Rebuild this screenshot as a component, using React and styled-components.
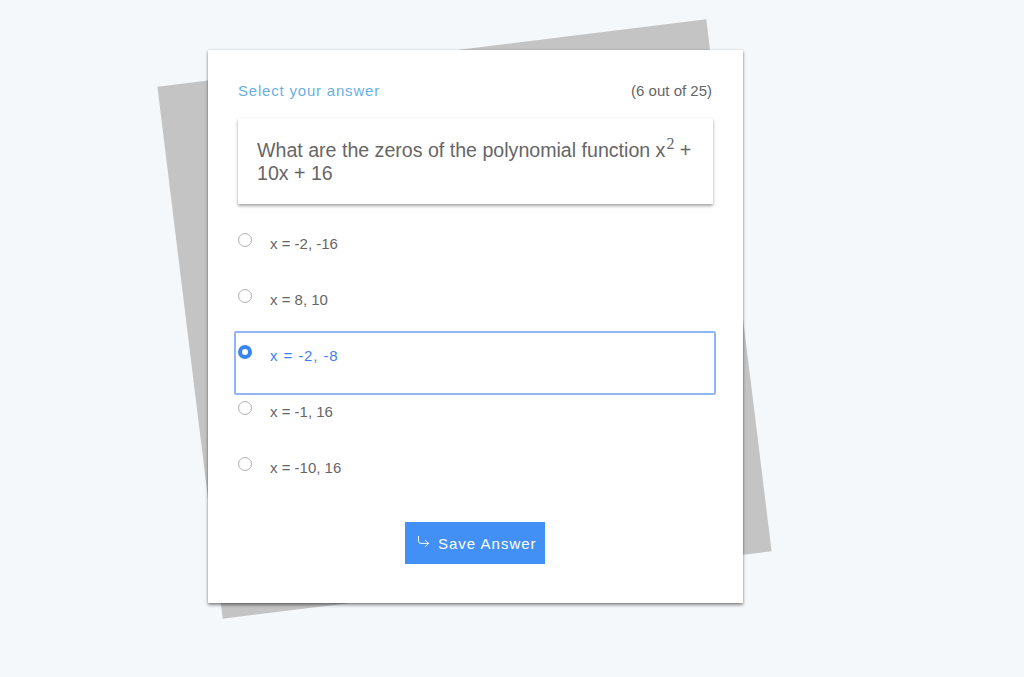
import React, { useState } from "react";
import styled, { createGlobalStyle } from "styled-components";
import { CornerDownRight } from "lucide-react";

const GlobalStyle = createGlobalStyle`
  html, body {
    margin: 0;
    padding: 0;
    background: #f5f8fb;
    font-family: "Liberation Sans", Arial, sans-serif;
  }
`;

const Page = styled.div`
  min-height: 677px;
  padding: 50px 0 0 208px;
  box-sizing: border-box;
`;

const Stack = styled.div`
  position: relative;
  width: 535px;
  z-index: 0;

  &::before {
    content: "";
    position: absolute;
    left: -20px;
    top: 1px;
    width: 553px;
    height: 536px;
    background: #c4c4c4;
    transform: rotate(-7deg);
    z-index: -1;
  }
`;

const Card = styled.div`
  background: #fff;
  padding: 31px 30px 39px 30px;
  box-shadow: 0 2px 3px rgba(0, 0, 0, 0.45), 0 0 2px rgba(0, 0, 0, 0.12);
`;

const Header = styled.div`
  display: flex;
  justify-content: space-between;
  align-items: center;
  line-height: 20px;
  font-size: 15px;
`;

const Title = styled.span`
  color: #6aafe2;
  letter-spacing: 0.8px;
`;

const Counter = styled.span`
  color: #666;
  margin-right: 1px;
`;

const Question = styled.div`
  margin-top: 17px;
  padding: 21px 14px 19px 19px;
  font-size: 19.6px;
  line-height: 23px;
  color: #666;
  box-shadow: 0 2px 3px rgba(0, 0, 0, 0.35), 0 0 1px rgba(0, 0, 0, 0.1);

  sup {
    font-family: "Liberation Serif", "Times New Roman", serif;
    font-size: 16px;
    line-height: 0;
    margin-left: 1px;
  }
`;

const Options = styled.div`
  margin: 15px -3px 0 -4px;
  display: flex;
  flex-direction: column;
`;

const Option = styled.label`
  display: flex;
  align-items: flex-start;
  gap: 18px;
  box-sizing: border-box;
  height: ${(p) => (p.$selected ? "64px" : "56px")};
  margin-bottom: ${(p) => (p.$selected ? "-8px" : "0")};
  padding: 12px 2px 0 2px;
  border: 2px solid ${(p) => (p.$selected ? "#93b4f5" : "transparent")};
  border-radius: 2px;
  cursor: pointer;
  position: relative;
  z-index: ${(p) => (p.$selected ? 1 : 0)};
`;

const Radio = styled.span`
  flex: none;
  width: 14px;
  height: 14px;
  border-radius: 50%;
  box-sizing: border-box;
  border: ${(p) => (p.$checked ? "4.5px solid #3a86f0" : "1px solid #b0b0b0")};
  background: #fff;
`;

const OptionText = styled.span`
  font-size: 15px;
  line-height: 21px;
  color: ${(p) => (p.$selected ? "#3b82f0" : "#666")};
  letter-spacing: ${(p) => (p.$selected ? "0.9px" : "0")};
`;

const Footer = styled.div`
  display: flex;
  justify-content: center;
  margin-top: 23px;
  padding-right: 1px;
`;

const SaveButton = styled.button`
  display: flex;
  align-items: center;
  gap: 7px;
  width: 140px;
  height: 42px;
  padding: 0 0 0 11px;
  border: none;
  background: #4290f5;
  color: #fff;
  font-family: "Liberation Sans", Arial, sans-serif;
  font-size: 15px;
  letter-spacing: 1px;
  cursor: pointer;

  svg {
    margin-top: -4px;
    flex: none;
  }
`;

const answers = ["x = -2, -16", "x = 8, 10", "x = -2, -8", "x = -1, 16", "x = -10, 16"];

export default function App() {
  const [selected, setSelected] = useState(2);

  return (
    <>
      <GlobalStyle />
      <Page>
        <Stack>
          <Card>
            <Header>
              <Title>Select your answer</Title>
              <Counter>(6 out of 25)</Counter>
            </Header>
            <Question>
              What are the zeros of the polynomial function x<sup>2</sup> + 10x + 16
            </Question>
            <Options>
              {answers.map((a, i) => (
                <Option key={i} $selected={i === selected} onClick={() => setSelected(i)}>
                  <Radio $checked={i === selected} />
                  <OptionText $selected={i === selected}>{a}</OptionText>
                </Option>
              ))}
            </Options>
            <Footer>
              <SaveButton>
                <CornerDownRight size={15} strokeWidth={1.5} />
                Save Answer
              </SaveButton>
            </Footer>
          </Card>
        </Stack>
      </Page>
    </>
  );
}
